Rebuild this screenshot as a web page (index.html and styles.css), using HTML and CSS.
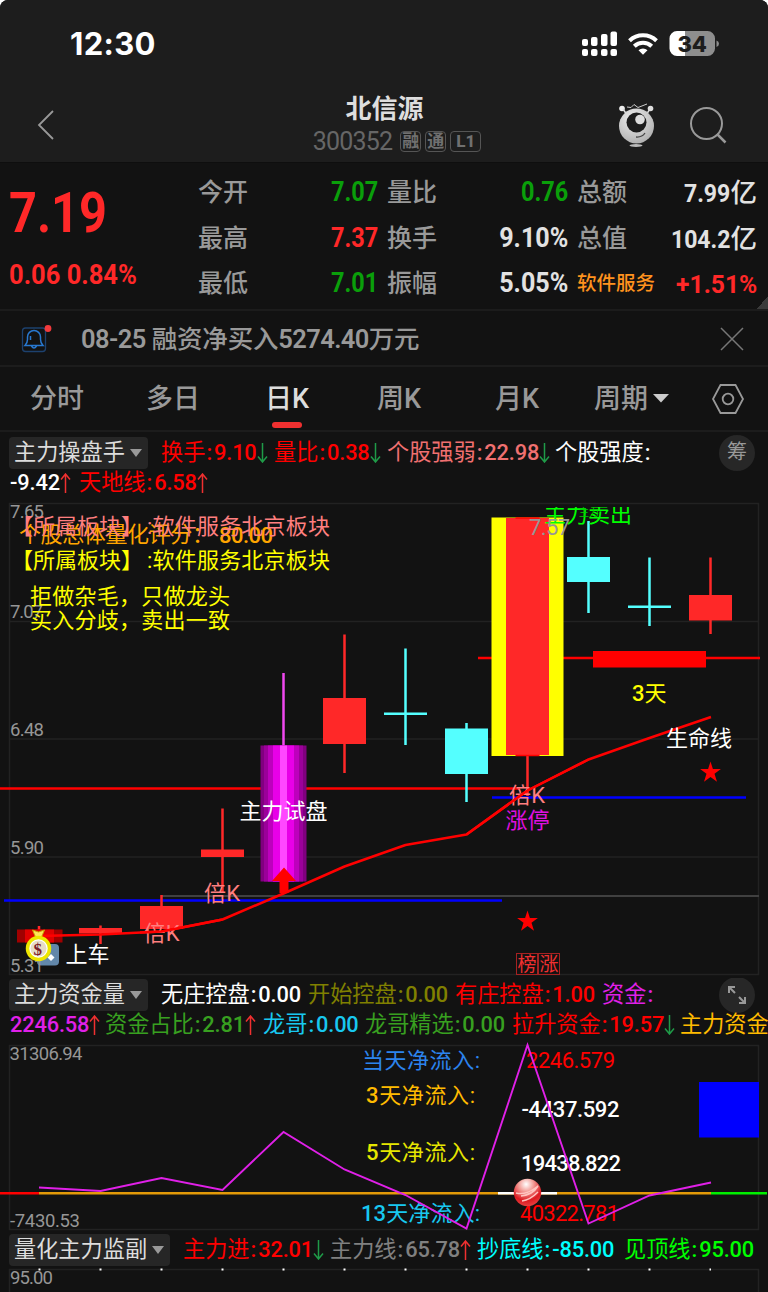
FILE: index.html
```html
<!DOCTYPE html>
<html lang="zh-CN">
<head>
<meta charset="utf-8">
<title>北信源 300352</title>
<link rel="stylesheet" href="styles.css">
</head>
<body>
<main class="screen">
  <header class="top">
    <div class="status">
      <span class="clock">12:30</span>
      <svg class="status-icons" width="140" height="28" viewBox="580 30 140 28">
        <g fill="#fff">
          <rect x="582" y="39" width="6" height="7" rx="2"/><rect x="591" y="37" width="6.500" height="9" rx="2"/><rect x="601" y="34" width="6.500" height="12" rx="2"/><rect x="610.500" y="31.500" width="6.500" height="14.500" rx="2"/>
          <rect x="582" y="49" width="6" height="7" rx="2"/><rect x="591" y="49" width="6.500" height="7" rx="2"/><rect x="601" y="49" width="6.500" height="7" rx="2"/><rect x="610.500" y="49" width="6.500" height="7" rx="2"/>
          <path d="M638.500 50.200a6.500 6.500 0 0 1 9 0l-4.500 4.500z"/>
        </g>
        <g fill="none" stroke="#fff" stroke-width="4"><path d="M629.500 40.800a19.500 19.500 0 0 1 27 0"/><path d="M634.300 46.200a12.500 12.500 0 0 1 17.400 0"/></g>
        <path d="M677 31h8.500v25H677a7.500 7.500 0 0 1-7.500-7.500v-10A7.500 7.500 0 0 1 677 31z" fill="#fff"/>
        <path d="M685.500 31h22a7.500 7.500 0 0 1 7.500 7.500v10a7.500 7.500 0 0 1-7.500 7.500h-22zM716.500 40.500q2.500 1 2.500 3.200t-2.500 3.200z" fill="#8e8e8e"/>
        <text x="692" y="52" class="battery">34</text>
      </svg>
    </div>
    <div class="title-row">
      <svg class="back" width="20" height="32" viewBox="0 0 20 32"><path d="M18 2 4 16l14 14"/></svg>
      <div class="title">
        <h1>北信源</h1>
        <div class="code"><span class="code-no">300352</span><b class="tag">融</b><b class="tag">通</b><b class="tag wide">L1</b></div>
      </div>
      <svg class="top-actions" width="120" height="50" viewBox="614 98 120 50">
        <defs><radialGradient id="bot" cx=".4" cy=".3" r=".8"><stop offset="0" stop-color="#eee"/><stop offset="1" stop-color="#aaa"/></radialGradient></defs>
        <circle cx="622" cy="106.500" r="2.800" fill="#eee"/><circle cx="650.500" cy="106.500" r="2.800" fill="#ddd"/>
        <path d="m623 107 4 6M650 107l-4 6" stroke="#ddd" stroke-width="1.500"/>
        <path d="m627 105 4 .5 3-3 4 3 9-3.500" fill="none" stroke="#ccc"/>
        <circle cx="636.500" cy="124" r="17.500" fill="url(#bot)"/>
        <circle cx="636.500" cy="120.500" r="10" fill="#1d1d1d"/><circle cx="640" cy="117.500" r="4.800" fill="#ddd"/>
        <path d="M636 135q6 .5 9-4" fill="none" stroke="#444" stroke-width="1.300"/>
        <ellipse cx="636" cy="143.500" rx="6.500" ry="1.500" fill="#bbb"/>
        <circle cx="706.500" cy="121.500" r="15.500" fill="none" stroke="#999" stroke-width="2"/><path d="m717 132 8.500 8.500" stroke="#999" stroke-width="2.500"/>
      </svg>
    </div>
  </header>

  <section class="quote">
    <div class="price"><strong><i class="num">7.19</i></strong><p><i class="num">0.06 0.84%</i></p></div>
    <dl class="stats">
      <dt>今开</dt><dd class="down"><i class="num">7.07</i></dd><dt>量比</dt><dd class="down"><i class="num">0.76</i></dd><dt>总额</dt><dd><i class="num">7.99</i>亿</dd>
      <dt>最高</dt><dd class="up"><i class="num">7.37</i></dd><dt>换手</dt><dd><i class="num pct">9.10%</i></dd><dt>总值</dt><dd><i class="num">104.2</i>亿</dd>
      <dt>最低</dt><dd class="down"><i class="num">7.01</i></dd><dt>振幅</dt><dd><i class="num pct">5.05%</i></dd><dt class="sector">软件服务</dt><dd class="up"><i class="num pct">+1.51%</i></dd>
    </dl>
  </section>

  <section class="news">
    <svg width="32" height="32" viewBox="20 322 32 32"><rect x="22.500" y="327" width="23" height="23.500" rx="3" fill="none" stroke="#1d416e" stroke-width="1.300"/><path d="M25 344.500c2-2 2.500-3 2.500-6v-2.500a6.500 6.500 0 0 1 13 0v2.500c0 3 .5 4 2.500 6zM31.500 345q2.500 4 5 0M30.500 335v4" fill="none" stroke="#2878d0" stroke-width="1.500"/><circle cx="48" cy="327.500" r="3.400" fill="#f23a3c"/></svg>
    <p><b>08-25</b> 融资净买入<b>5274.40</b>万元</p>
    <svg class="close" width="24" height="24" viewBox="0 0 24 24"><path d="m1 1 22 22M23 1 1 23"/></svg>
  </section>

  <nav class="tabs">
    <a>分时</a><a>多日</a><a class="active">日K</a><a>周K</a><a>月K</a>
    <a>周期<svg width="16" height="9" viewBox="0 0 16 9"><path d="M0 0h16L8 8.500z" fill="#ccc"/></svg></a>
    <svg width="34" height="32" viewBox="0 0 34 32"><path d="M9.500 2h15L32 16l-7.500 14h-15L2 16z" fill="none" stroke="#999" stroke-width="1.800"/><circle cx="17" cy="16" r="5.300" fill="none" stroke="#999" stroke-width="1.800"/></svg>
  </nav>

  <section class="legend main-legend">
    <div class="row main-first">
      <span class="chip">主力操盘手<i class="tri"></i></span>
      <span class="red">换手<i><u>:</u>9.10</i><svg class="arr dn" viewBox="0 0 11 20"><path d="M5.500 0v19M1 13.500l4.500 5.500 4.500-5.500"/></svg></span>
      <span class="red">量比<i><u>:</u>0.38</i><svg class="arr dn" viewBox="0 0 11 20"><path d="M5.500 0v19M1 13.500l4.500 5.500 4.500-5.500"/></svg></span>
      <span class="salmon">个股强弱<i><u>:</u>22.98</i><svg class="arr dn" viewBox="0 0 11 20"><path d="M5.500 0v19M1 13.500l4.500 5.500 4.500-5.500"/></svg></span>
      <span class="white">个股强度<i><u>:</u></i></span>
      <span class="round">筹</span>
    </div>
    <div class="row second main-second">
      <span class="white"><i>-9.42</i><svg class="arr ri" viewBox="0 0 11 20"><path d="M5.500 20V1M1 6.500 5.500 1 10 6.500"/></svg></span>
      <span class="red">天地线<i><u>:</u>6.58</i><svg class="arr ri" viewBox="0 0 11 20"><path d="M5.500 20V1M1 6.500 5.500 1 10 6.500"/></svg></span>
    </div>
  </section>

  <svg class="chart" width="768" height="480" viewBox="0 498 768 480">
    <path class="grid" d="M9 503.500H759M9 621.500H759M9 739H759M9 857H759M9 974.500H759M9.500 503V975M758.500 503V975"/>
    <path d="M161.500 896H759" stroke="#404040" stroke-width="2"/>
    <g class="axis">
      <text x="10" y="518" textLength="34">7.65</text><text x="10" y="617.500" textLength="33">7.07</text><text x="10" y="736" textLength="34">6.48</text><text x="10" y="854" textLength="34">5.90</text>
    </g>
    <path d="M4 900.500H502M492 797.500H746" stroke="#00f" stroke-width="2.400"/>
    <path d="M0 788.500H520M478 658H760" stroke="#f00" stroke-width="2.400"/>
    <rect x="593" y="651" width="113" height="16.500" fill="#f00"/>
    <rect x="491.500" y="517.500" width="72" height="238.500" fill="#ff0"/>
    <g class="rise">
      <path d="M39 926v16M100.500 925.500V944M161.500 895v34M222.500 808.500V893M344.500 634.500V773M527.500 752v44M710.500 557.500V634"/>
      <rect x="79" y="928" width="43" height="5.500"/><rect x="140" y="906" width="43" height="23"/><rect x="201" y="849.500" width="43" height="7.500"/><rect x="323" y="698" width="43" height="46"/><rect x="506" y="518" width="43" height="237"/><rect x="689" y="595" width="43" height="25.500"/>
    </g>
    <path d="M515.500 518h24M515.500 755.500h24" stroke="#f00" stroke-width="1.500"/>
    <g class="fall">
      <path d="M405.500 648.500V745M466.500 723V802M588.500 521V613M649.500 557.500V626M384 713.700h43M628 606.700h43"/>
      <rect x="445" y="728.500" width="43" height="45.500"/><rect x="567" y="557" width="43" height="25"/>
    </g>
    <rect x="17" y="929.500" width="45.500" height="13" fill="#a00000"/><rect x="25" y="929.500" width="29" height="13" fill="#e00000"/>
    <path d="M283.500 673v73" stroke="#f048f0" stroke-width="2.500"/>
    <g>
      <rect x="260.500" y="745.500" width="46" height="136" fill="#80007f"/><rect x="264" y="745.500" width="39" height="136" fill="#9b009a"/><rect x="268" y="745.500" width="31" height="136" fill="#bd00bd"/><rect x="273" y="745.500" width="21" height="136" fill="#e800e8"/><rect x="280" y="745.500" width="7" height="136" fill="#ff48ff"/>
    </g>
    <path class="ma" d="M39 936 100.500 934.500 161.500 931.500 222.500 919.500 283.500 893.500 344.500 866.500 405.500 845 466.500 834.500 527.500 790.500 588.500 759.500 649.500 738 711 717"/>
    <path d="M284 867.500 296 881h-7.500v12h-9v-12H272z" fill="#f00"/>
    <g fill="#f00"><path id="star" d="m527.500 910.500 2.400 7.500h8l-6.400 4.700 2.500 8-6.500-4.800-6.500 4.800 2.500-8-6.400-4.700h8z"/><use href="#star" x="183" y="-149"/></g>
    <g class="note">
      <text x="19" y="542" fill="#ffa500" textLength="195">个股总体量化评分：</text><text x="219" y="542.500" fill="#ffa500" textLength="54" class="bolder">80.00</text>
      <text x="11" y="534" fill="#ff7f7f" textLength="132">【所属板块】</text><text x="147" y="534" fill="#ff7f7f" textLength="183">:软件服务北京板块</text>
      <text x="11" y="568" fill="#ff0" textLength="132">【所属板块】</text><text x="147" y="568" fill="#ff0" textLength="183">:软件服务北京板块</text>
      <text x="30" y="604" fill="#ff0" textLength="200">拒做杂毛，只做龙头</text><text x="30" y="627.500" fill="#ff0" textLength="200">买入分歧，卖出一致</text>
      <clipPath id="plot"><rect x="9" y="507" width="750" height="467"/></clipPath>
      <text x="544" y="522" fill="#0f0" textLength="88" clip-path="url(#plot)">主力卖出</text>
      <text x="579" y="516" fill="#0c0" class="tiny" clip-path="url(#plot)">主力</text>
      <text x="239.500" y="819" fill="#fff" textLength="88">主力试盘</text>
      <text x="204" y="901" fill="#ff7f7f" textLength="36">倍K</text><text x="143.500" y="940.500" fill="#ff7f7f" textLength="36">倍K</text><text x="509" y="802.500" fill="#ff7f7f" textLength="36">倍K</text>
      <text x="505.500" y="827.500" fill="#e010e0">涨停</text>
      <text x="632" y="700.500" fill="#ff0"><tspan class="bolder">3</tspan>天</text>
      <text x="666" y="745.500" fill="#fff">生命线</text><text x="65.500" y="962" fill="#fff">上车</text>
    </g>
    <path class="ma" d="M466.500 834.500 527.500 790.500 588.500 759.500M140 932.500l21.500-1 61-12"/>
    <text x="529" y="535" class="axis peak" textLength="41">7.57</text>
    <g class="bang"><rect x="516.500" y="953.500" width="21" height="21"/><rect x="538.500" y="953.500" width="21" height="21"/><text x="517.500" y="971">榜</text><text x="539.500" y="971">涨</text></g>
    <rect x="37" y="944" width="22" height="21.500" rx="4" fill="#6287aa"/><path d="m51 954 3.500 3.500L51 961l-3.500-3.500z" fill="#fff"/>
    <text x="10" y="971.500" class="axis" textLength="34">5.31</text>
    <path d="m32.500 930 6 2 6-2-3 7h-6z" fill="#ffe45a" stroke="#c9a800"/><circle cx="38.500" cy="948.500" r="11" fill="#fff" stroke="#eee600" stroke-width="3.500"/><circle cx="38.500" cy="948.500" r="8" fill="#e6dcc8"/><text x="33.500" y="954.500" class="money">$</text>
  </svg>

  <section class="legend flow-legend">
    <div class="row flow-first">
      <span class="chip">主力资金量<i class="tri"></i></span>
      <span class="white">无庄控盘<i><u>:</u>0.00</i></span><span class="olive">开始控盘<i><u>:</u>0.00</i></span><span class="red">有庄控盘<i><u>:</u>1.00</i></span><span class="violet">资金<i><u>:</u></i></span>
      <span class="round"><svg width="20" height="20" viewBox="0 0 20 20"><path d="M2 8V2h6M2.500 2.500 8 8M18 12v6h-6m5.500-.5L12 12"/></svg></span>
    </div>
    <div class="row second flow-second">
      <span class="violet"><i>2246.58</i><svg class="arr ri" viewBox="0 0 11 20"><path d="M5.500 20V1M1 6.500 5.500 1 10 6.500"/></svg></span>
      <span class="green">资金占比<i><u>:</u>2.81</i><svg class="arr ri" viewBox="0 0 11 20"><path d="M5.500 20V1M1 6.500 5.500 1 10 6.500"/></svg></span>
      <span class="sky">龙哥<i><u>:</u>0.00</i></span><span class="green">龙哥精选<i><u>:</u>0.00</i></span>
      <span class="red">拉升资金<i><u>:</u>19.57</i><svg class="arr dn" viewBox="0 0 11 20"><path d="M5.500 0v19M1 13.500l4.500 5.500 4.500-5.500"/></svg></span>
      <span class="amber">主力资金</span>
    </div>
  </section>

  <svg class="chart" width="768" height="193" viewBox="0 1040 768 193">
    <defs><radialGradient id="ball" cx=".45" cy=".2" r=".85"><stop offset="0" stop-color="#fff"/><stop offset=".3" stop-color="#f4a29c"/><stop offset=".7" stop-color="#dc1a20"/><stop offset="1" stop-color="#e84a48"/></radialGradient></defs>
    <path class="grid" d="M9 1045.500H759M9 1229.500H759M9.500 1045V1230M758.500 1045V1230"/>
    <rect x="699" y="1082" width="60" height="55.500" fill="#00f"/>
    <g class="axis"><text x="9.500" y="1060" textLength="73">31306.94</text><text x="10" y="1226.500" textLength="70">-7430.53</text></g>
    <g class="note">
      <text x="362" y="1068" fill="#2c84ee" textLength="118">当天净流入:</text>
      <text x="366" y="1102.500" fill="#fb0" textLength="109"><tspan class="bolder">3</tspan>天净流入:</text>
      <text x="366" y="1160" fill="#e6e600" textLength="109"><tspan class="bolder">5</tspan>天净流入:</text>
      <text x="361" y="1220.500" fill="#18c8f0" textLength="119"><tspan class="bolder">13</tspan>天净流入:</text>
      <text x="526" y="1067.500" fill="#f00" textLength="89">2246.579</text>
      <g class="bolder"><text x="521.500" y="1117" fill="#fff" textLength="98">-4437.592</text><text x="521" y="1171" fill="#fff" textLength="100">19438.822</text></g>
      <text x="520" y="1221" fill="#f00" textLength="99">40322.781</text>
    </g>
    <g fill="none" stroke-width="2.400"><path d="M39 1193.300H711" stroke="#e39a08"/><path d="M0 1193.300H39" stroke="#f00"/><path d="M711 1193.300H767" stroke="#00f000"/><path d="M498 1193.300H557" stroke="#fff"/></g>
    <path d="M39 1187.500 100.500 1191 161.500 1178 222.500 1190 283.500 1132 344.500 1169.500 405.500 1195 466.500 1228.500 527.500 1045 588.500 1223.500 649.500 1195.500 711 1182.500" fill="none" stroke="#e020e8" stroke-width="1.900"/>
    <circle cx="527.500" cy="1192.500" r="13.700" fill="url(#ball)"/><path d="M516 1193c8 2 14-1 22-7-3 5-8 9-17 10M522 1201c7-1 11-4 16-9" fill="none" stroke="#ffc4bf" stroke-width="1.500"/>
  </svg>

  <section class="legend watch-legend">
    <div class="row watch-row">
      <span class="chip">量化主力监副<i class="tri"></i></span>
      <span class="red">主力进<i><u>:</u>32.01</i><svg class="arr dn" viewBox="0 0 11 20"><path d="M5.500 0v19M1 13.500l4.500 5.500 4.500-5.500"/></svg></span>
      <span class="gray">主力线<i><u>:</u>65.78</i><svg class="arr ri" viewBox="0 0 11 20"><path d="M5.500 20V1M1 6.500 5.500 1 10 6.500"/></svg></span>
      <span class="cyan">抄底线<i><u>:</u>-85.00</i></span><span class="lime">见顶线<i><u>:</u>95.00</i></span>
    </div>
  </section>
  <svg class="chart" width="768" height="26" viewBox="0 1266 768 26">
    <path class="grid" d="M9 1269.500H759M9.500 1269V1292M758.500 1269V1292"/>
    <path d="M38.500 1269.500H711" stroke="#fff" stroke-width="2" stroke-dasharray="2 59"/>
    <text x="10" y="1284" class="axis" textLength="43">95.00</text>
  </svg>
</main>
</body>
</html>
```

FILE: styles.css
```css
* { box-sizing: border-box; }
body { margin: 0; background: #fff; }
.screen {
  width: 768px; height: 1292px; overflow: hidden;
  background: #121212; border-radius: 8px 8px 0 0;
  font-family: Roboto, "Noto Sans CJK SC", sans-serif; color: #999;
}
i { font-style: normal; }
u { text-decoration: none; }
svg { display: block; flex: none; }
h1, p, dl, dd { margin: 0; }

.top { height: 163px; background: #1d1d1d; border-bottom: 1px solid #0e0e0e; }
.status { display: flex; justify-content: space-between; align-items: center; height: 88px; padding: 0 48px 0 70px; }
.clock { font: 700 31px/36px Inter, sans-serif; letter-spacing: .3px; color: #fff; }
.battery { text-anchor: middle; font: 800 22px Inter, sans-serif; letter-spacing: -.3px; fill: #1d1d1d; }
.title-row { display: grid; grid-template-columns: 122px 1fr 122px; align-items: center; height: 74px; padding: 0 34px 0 35px; }
.back { margin-top: -1px; }
.back path { fill: none; stroke: #999; stroke-width: 1.800; }
.title { display: flex; flex-direction: column; align-items: center; }
.title h1 { font-size: 26px; line-height: 32px; color: #dedede; }
.code { display: flex; align-items: center; gap: 4px; height: 32px; margin-left: 25px; }
.code-no { font-size: 25px; color: #666; margin-right: 4px; letter-spacing: -.8px; }
.tag { display: flex; align-items: center; justify-content: center; width: 21px; height: 21px; border: 1px solid #555; border-radius: 4px; font-size: 17px; line-height: 18px; color: #707070; }
.tag.wide { width: 31px; font-weight: 800; }
.top-actions { margin: -1px 0 0 2px; }

.quote { display: flex; height: 148px; padding: 7px 11px 4px 9px; border-bottom: 2px solid #1c1c1c; background: linear-gradient(135deg, transparent 50%, #3a3a3a 50%) right bottom / 12px 12px no-repeat; }
.num { display: inline-block; transform: scaleX(.87); transform-origin: right center; font-weight: 700; }
.num.pct { transform: scaleX(.93); }
.price { width: 189px; color: #ff2828; }
.price .num { transform-origin: left center; white-space: nowrap; }
.price strong { display: block; font-size: 56px; line-height: 87px; }
.price p { font-size: 27px; line-height: 36px; }
.price p .num { transform: scaleX(.945); }
.stats { display: grid; grid-template-columns: 50px 130px 59px 131px 79px 110px; grid-auto-rows: 45.500px; width: 559px; align-items: center; font-size: 25px; }
.stats dt { line-height: 45px; white-space: nowrap; font-weight: 450; }
.stats dt:nth-of-type(3n+2), .stats dt:nth-of-type(3n) { padding-left: 9px; }
.stats dd { display: flex; justify-content: flex-end; font-size: 27px; font-weight: 500; line-height: 45px; color: #e2e2e2; white-space: nowrap; }
.stats dd:nth-of-type(3n) { font-size: 26.500px; line-height: 43px; }
.stats .sector { font-size: 19.500px; color: #ff921e; font-weight: 500; }
.stats .up { color: #ff2828; }
.stats .down { color: #0a9f0a; }

.news { display: flex; align-items: center; height: 56px; padding: 1px 24px 0 20px; border-bottom: 2px solid #1c1c1c; font-size: 25.500px; }
.news p { flex: 1; padding-left: 29px; line-height: 38px; white-space: nowrap; letter-spacing: -.2px; font-weight: 450; }
.news b { font-weight: 600; letter-spacing: -.6px; }
.close { fill: none; stroke: #777; stroke-width: 1.500; }

.tabs { display: grid; grid-template-columns: 116px 119px 112px 118px 99px 117px 34px; height: 65px; padding-left: 30px; align-items: center; border-bottom: 2px solid #1c1c1c; font-size: 27px; font-weight: 500; }
.tabs a { display: flex; align-items: center; gap: 5px; height: 63px; line-height: 60px; }
.tabs .active { position: relative; color: #ddd; }
.tabs .active::after { content: ""; position: absolute; left: 7px; bottom: 2px; width: 30px; height: 6px; border-radius: 3px; background: #f03030; }

.legend { font-size: 22.200px; padding-left: 9px; white-space: nowrap; overflow: hidden; }
.main-legend { height: 66px; padding-top: 4px; }
.flow-legend { height: 62px; }
.watch-legend { height: 33px; }
.row { display: grid; align-items: center; height: 33px; line-height: 33px; }
.row > span { display: flex; align-items: center; }
.row span > i:not(.tri) { font-size: 21.800px; letter-spacing: -.15px; font-weight: 500; }
.row u { margin: 0 2px 0 1px; }
.row.second { height: 27px; line-height: 27px; padding-left: 1px; }
.main-first { grid-template-columns: 152px 113px 113px 168px 164px 36px; }
.main-second { grid-template-columns: 69px 200px; }
.flow-first { grid-template-columns: 152px 147px 147px 147px 117px 36px; }
.flow-second { grid-template-columns: 95px 158px 102px 147px 168px 100px; }
.watch-row { grid-template-columns: 174px 147px 147px 147px 140px; }
.row .chip { justify-self: start; height: 32px; padding: 0 6px 0 5px; gap: 5px; background: #262626; border-radius: 4px; color: #ddd; }
.tri { border: 6.500px solid transparent; border-top: 8px solid #999; border-bottom: 0; }
.row .round { width: 36px; height: 36px; margin: -2px 0; border-radius: 50%; justify-content: center; background: #272727; color: #999; font-size: 20px; }
.round svg { fill: none; stroke: #999; stroke-width: 2; }
.arr { width: 11px; height: 20px; fill: none; stroke-width: 1.500; }
.dn { stroke: #1f9b48; }
.ri { stroke: #f03030; }
.red { color: #f00; }
.salmon { color: #f07070; }
.white { color: #fff; }
.olive { color: #808000; }
.violet { color: #e020e8; }
.green { color: #38a020; }
.sky { color: #18c8f0; }
.amber { color: #fb0; }
.gray { color: #808080; }
.cyan { color: #0ff; }
.lime { color: #0f0; }

.grid { fill: none; stroke: #222; stroke-width: 1.500; }
.axis, .axis text { font: 400 18.500px Roboto, sans-serif; fill: #969696; }
.axis.peak { font-size: 22px; }
.note { font-size: 22px; }
.bolder { font-weight: 500; }
.note .tiny { font-size: 10px; }
.rise { fill: #ff2828; }
.rise path { stroke: #ff2828; stroke-width: 2.500; }
.fall { fill: #54ffff; }
.fall path { stroke: #54ffff; stroke-width: 2.500; }
.ma { fill: none; stroke: #f00; stroke-width: 2.500; stroke-linejoin: round; }
.bang rect { fill: none; stroke: #a52222; }
.bang text { font-size: 19px; fill: #f03030; }
.money { font: 700 17px "Liberation Serif", serif; fill: #7b1d2a; }
```
